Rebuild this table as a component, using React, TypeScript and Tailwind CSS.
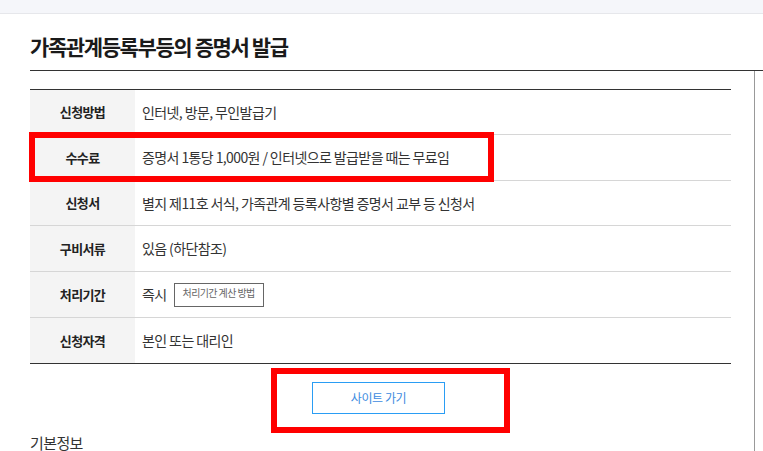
import React from "react";

const rows = [
    { label: "신청방법", h: "h-[45px]", value: "인터넷, 방문, 무인발급기" },
    { label: "수수료", h: "h-[46px]", value: "증명서 1통당 1,000원 / 인터넷으로 발급받을 때는 무료임" },
    { label: "신청서", h: "h-[45px]", value: "별지 제11호 서식, 가족관계 등록사항별 증명서 교부 등 신청서" },
    { label: "구비서류", h: "h-[46px]", value: "있음 (하단참조)" },
    { label: "처리기간", h: "h-[46px]", value: "즉시", extra: true },
    { label: "신청자격", h: "h-[46px]", value: "본인 또는 대리인", last: true },
];

function InfoRow({ row }: { row: (typeof rows)[number] }) {
    return (
        <div
            className={`flex ${row.h} ${row.last ? "border-b border-[#333]" : "border-b border-[#d6d6d6]"}`}
        >
            <div className="w-[105px] shrink-0 bg-[#f4f4f4] flex items-center justify-center text-[13px] font-bold text-[#222] tracking-[-0.6px]">
                {row.label}
            </div>
            <div className="flex-1 flex items-center pl-[7px] text-[14px] text-[#333] tracking-[-0.6px]">
                {row.value}
                {row.extra && (
                    <span className="ml-[7px] h-[24px] px-[8px] border border-[#666] text-[10px] text-[#666] tracking-[-0.6px] leading-[18px]">
                        처리기간 계산 방법
                    </span>
                )}
            </div>
        </div>
    );
}

export default function App() {
    return (
        <div className="relative w-[763px] h-[451px] overflow-hidden bg-white font-['Noto_Sans_CJK_KR',sans-serif]">
            {/* top band */}
            <div className="h-[14px] bg-[#f5f6fa] border-b border-[#e6e7eb]" />

            {/* title */}
            <div className="h-[56px] pl-[30px] pt-[18px]">
                <h2 className="text-[21px] leading-[28px] font-bold text-[#1a1a1a] tracking-[-1.4px]">
                    가족관계등록부등의 증명서 발급
                </h2>
            </div>

            <div className="ml-[30px] border-t border-[#333]">
                <div className="w-[725px] border-r border-[#999] pt-[18px] pr-[23px] h-[400px]">
                    {/* table */}
                    <div className="border-t border-[#333]">
                        {rows.map((row) => (
                            <InfoRow key={row.label} row={row} />
                        ))}
                    </div>

                    {/* site button */}
                    <div className="flex justify-center pt-[18px] pr-[4px]">
                        <button className="w-[133px] h-[32px] border border-[#2a9df4] text-[12px] text-[#3d8be0] tracking-[-0.4px] bg-white">
                            사이트 가기
                        </button>
                    </div>

                    <div className="pt-[18px] text-[15px] text-[#333] tracking-[-0.6px] leading-[22px]">
                        기본정보
                    </div>
                </div>
            </div>

            {/* red annotation boxes */}
            <div className="absolute left-[29px] top-[132px] w-[465px] h-[50px] border-[6px] border-[#ff0000]" />
            <div className="absolute left-[271px] top-[368px] w-[239px] h-[65px] border-[6px] border-[#ff0000]" />
        </div>
    );
}
